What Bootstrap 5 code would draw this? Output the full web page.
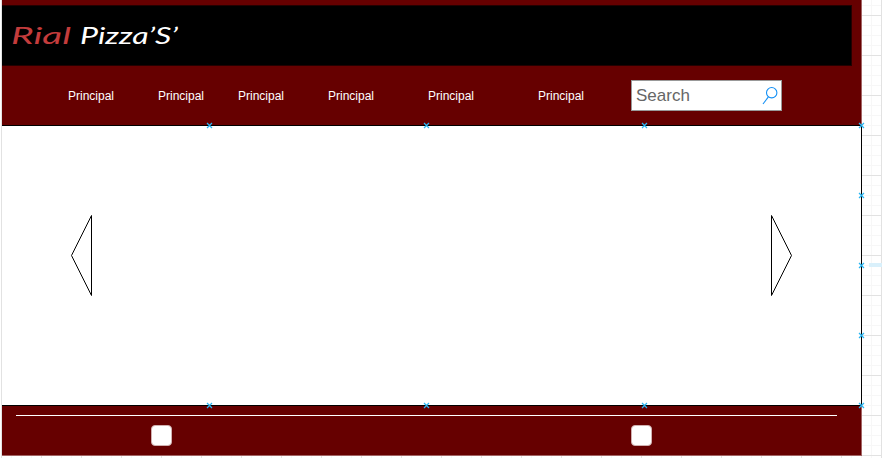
<!DOCTYPE html>
<html lang="es">
<head>
<meta charset="utf-8">
<title>Rial Pizza'S'</title>
<link href="https://cdn.jsdelivr.net/npm/bootstrap@5.3.0/dist/css/bootstrap.min.css" rel="stylesheet">
<style>
body{height:458px;font-family:"Liberation Sans",Arial,sans-serif;background-color:#fff;
background-image:linear-gradient(#e2e2e2 1px,transparent 1px),linear-gradient(90deg,#e2e2e2 1px,transparent 1px),linear-gradient(#f7f7f7 1px,transparent 1px),linear-gradient(90deg,#f7f7f7 1px,transparent 1px);
background-size:40px 40px,40px 40px,10px 10px,10px 10px;background-position:0 15px,1px 0,0 5px,1px 0}
.left-edge{width:2px;height:456px;background:#fff;border-right:1px solid #e2e2e2}
.mock{width:860px;height:456px;background:#600;border-right:1px solid #a36464;border-bottom:1px solid #a36464}
.brand-bar{width:850px;height:61px;margin-top:5px;background:#000;border:solid #240000;border-width:1px 1px 1px 0}
.menu{height:59px;padding-left:66px;font-size:12px;line-height:14px}
.w80{width:80px}.w90{width:90px}.w100{width:100px}.w110{width:110px}.w93{width:93px}
.search-box{width:151px;height:31px;border:1px solid #999;padding-left:4px;padding-right:3px;font-size:17px;line-height:29px;color:#666}
.slider{width:860px;height:281px;border:solid #000;border-width:1px 1px 1px 0;padding:0 68px 20px 68px}
.rule{width:821px;height:1px;margin:9px 0 0 14px;background:#fff}
.marks{padding:9px 0 0 149px;gap:459px}
.box{width:21px;height:21px;border-radius:4px;background:#fff;border:1px solid #d0b0b0}
.handles{left:0;top:0}
.guide{left:869px;top:263px;width:13px;height:4px;background:#d9f0fb}
</style>
<script src="https://cdn.jsdelivr.net/npm/bootstrap@5.3.0/dist/js/bootstrap.bundle.min.js"></script>
</head>
<body class="m-0 overflow-hidden position-relative d-flex align-items-start">
<div class="left-edge flex-shrink-0"></div>
<div class="mock d-flex flex-column flex-shrink-0">
 <header class="brand-bar flex-shrink-0">
  <svg class="d-block" width="200" height="59" font-family="Lato, sans-serif" font-size="24" font-style="italic">
   <text x="9" y="37.5" fill="#c43c3c" textLength="60" lengthAdjust="spacingAndGlyphs">Rial</text>
   <text x="78" y="37.5" fill="#fff" textLength="98" lengthAdjust="spacingAndGlyphs">Pizza’S’</text>
  </svg>
 </header>
 <nav class="menu d-flex align-items-center text-white flex-shrink-0">
  <span class="w90">Principal</span><span class="w80">Principal</span><span class="w90">Principal</span><span class="w100">Principal</span><span class="w110">Principal</span><span class="w93">Principal</span>
  <div class="search-box bg-white d-flex align-items-center justify-content-between"><span>Search</span>
   <svg width="16" height="20" fill="none" stroke="#1490f5" stroke-width="1.1"><circle cx="9.7" cy="6.7" r="5.2"/><path d="M6.4 10.8 1 18"/></svg>
  </div>
 </nav>
 <main class="slider bg-white d-flex justify-content-between align-items-center flex-shrink-0">
  <svg width="23" height="83" fill="none" stroke="#000"><path d="M21.5 1.5v80l-20-40z"/></svg>
  <svg width="23" height="83" fill="none" stroke="#000"><path d="M1.5 1.5v80l20-40z"/></svg>
 </main>
 <footer>
  <div class="rule"></div>
  <div class="marks d-flex"><div class="box"></div><div class="box"></div></div>
 </footer>
</div>
<div class="guide position-absolute"></div>
<svg class="handles position-absolute" width="882" height="458" stroke="#29b6f2" stroke-width="1.2">
 <defs><path id="handle" d="M-2-2 3 3M3-2-2 3"/></defs>
 <use href="#handle" x="209" y="125"/><use href="#handle" x="426" y="125"/><use href="#handle" x="644" y="125"/><use href="#handle" x="861" y="125"/>
 <use href="#handle" x="861" y="195"/><use href="#handle" x="861" y="265"/><use href="#handle" x="861" y="335"/>
 <use href="#handle" x="209" y="405"/><use href="#handle" x="426" y="405"/><use href="#handle" x="644" y="405"/><use href="#handle" x="861" y="405"/>
</svg>
</body>
</html>
